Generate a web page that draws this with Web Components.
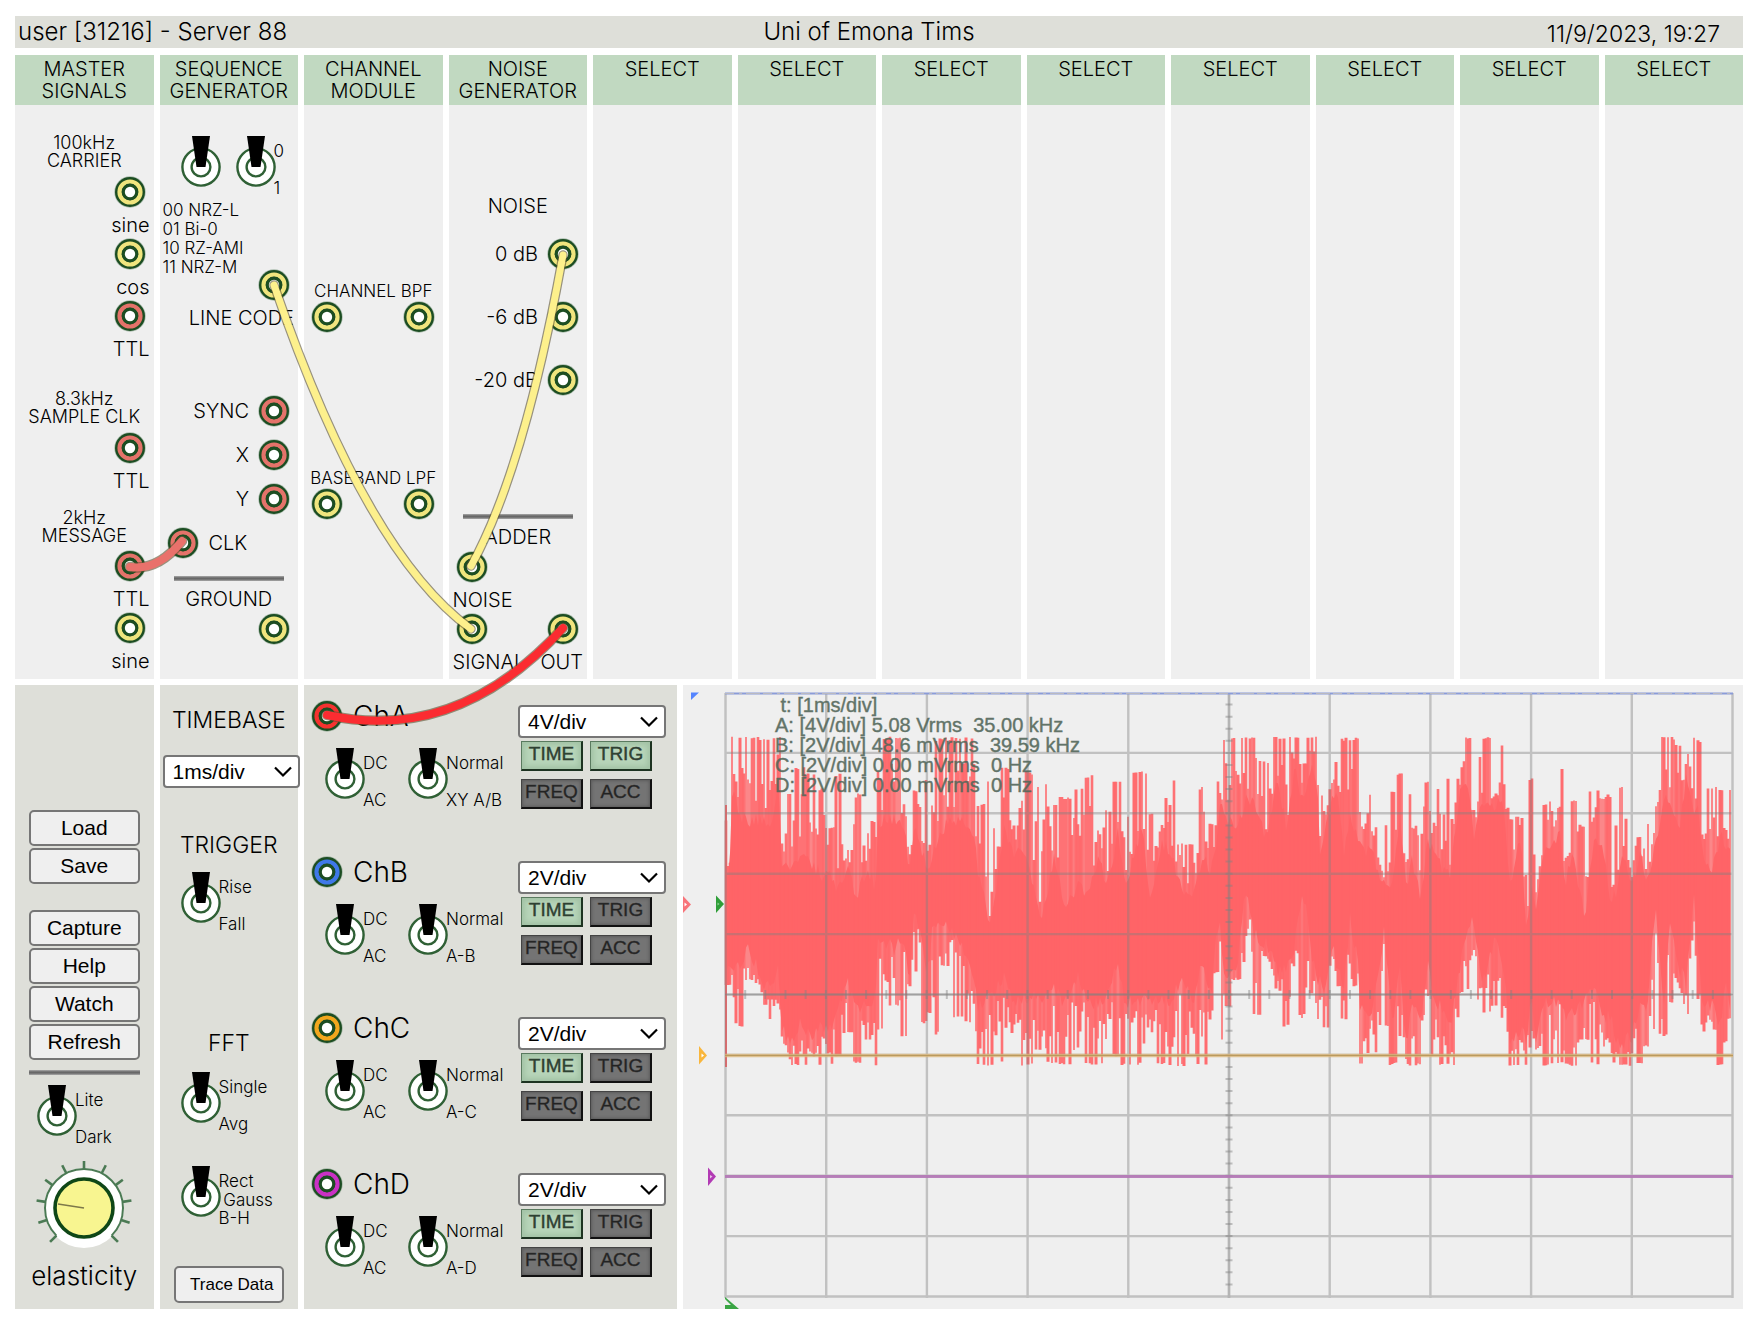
<!DOCTYPE html>
<html lang="en">
<head>
<meta charset="utf-8">
<title>Uni of Emona Tims</title>
<style>
  html, body { margin: 0; background: #fff; }
  body { font-family: Inter, "Noto Sans", sans-serif; font-weight: 300; color: #000; }
</style>
</head>
<body>
<tims-bench></tims-bench>

<template id="t-bench">
  <style>
    :host { display: block; padding: 16px 19px 19px 15px; }
    main { display: grid; gap: 6px; position: relative; margin-top: 7px; }
    .rack { display: grid; grid-template-columns: repeat(12, minmax(0, 1fr)); gap: 6px; }
    .desk { display: grid; grid-template-columns: 277fr 277fr 746fr 2120fr; gap: 6px; }
    .desk > * { min-width: 0; }
    .panel { background: #dedfd9; box-sizing: border-box; min-height: 624px; }

    .note { text-align: center; font-size: 18px; line-height: 18px; }
    .cap { text-align: center; font-size: 20px; line-height: 20px; }
    .fine { text-align: center; font-size: 17px; line-height: 20px; }
    .jackrow { display: flex; justify-content: flex-end; align-items: center; padding: 0 8px 0 7px; gap: 9px; font-size: 20px; line-height: 20px; }
    .jackrow.left { justify-content: flex-start; gap: 10px; }
    .jackrow.pair { justify-content: space-between; }
    .tag { display: flex; justify-content: flex-end; padding: 7px 4px 3px; font-size: 20px; line-height: 20px; }
    .tag.left { justify-content: flex-start; }
    .tag.pair { justify-content: space-between; }
    .r44 { height: 44px; }
    .r63 { height: 63px; }
    hr { box-sizing: border-box; height: 5px; margin: 0 14px; border: 0; background: linear-gradient(#aaa, #686868 40%, #686868 60%, #aaa); }

    .switches { display: flex; padding: 31px 0 0 21px; }
    .switches toggle-switch:first-child { width: 55px; }
    .codes { display: flex; justify-content: space-between; align-items: flex-start; height: 100px; padding: 3px 8px 0 3px; font-size: 17px; line-height: 19px; white-space: nowrap; }
    .codes patch-jack { align-self: flex-end; }

    .menu { display: flex; flex-direction: column; padding-top: 125px; }
    .menu form { display: flex; flex-direction: column; gap: 2px; margin: 0 14px; }
    .menu .second { margin-top: 24px; }
    .menu hr { margin-top: 10px; margin-bottom: 10px; }
    .menu toggle-switch { margin-left: 22px; }
    .menu knob-dial { margin: 14px auto 11px; }
    .big { text-align: center; font-size: 26px; line-height: 28px; }
    .head { text-align: center; font-size: 23px; line-height: 28px; }
    .time { display: flex; flex-direction: column; padding-top: 21px; position: relative; }
    .time toggle-switch { margin-left: 21px; }
    .time div-select { margin: 21px 0 43px 3px; width: 137px; }
  </style>
  <title-bar>
    <span slot="start">user [31216] - Server 88</span>
    <span slot="middle">Uni of Emona Tims</span>
    <time slot="end" datetime="2023-09-11T19:27">11/9/2023, 19:27</time>
  </title-bar>
  <main>
    <div class="rack">
      <rack-module>
        <span slot="name">MASTER<br>SIGNALS</span>
        <div class="note" style="padding:29px 0 6px">100kHz<br>CARRIER</div>
        <div class="jackrow"><patch-jack></patch-jack></div><div class="tag">sine</div>
        <div class="jackrow"><patch-jack></patch-jack></div><div class="tag">cos</div>
        <div class="jackrow"><patch-jack color="#e4736a"></patch-jack></div><div class="tag">TTL</div>
        <div class="note" style="padding:28px 0 6px">8.3kHz<br>SAMPLE CLK</div>
        <div class="jackrow"><patch-jack color="#e4736a"></patch-jack></div><div class="tag">TTL</div>
        <div class="note" style="padding:15px 0 5px">2kHz<br>MESSAGE</div>
        <div class="jackrow"><patch-jack color="#e4736a"></patch-jack></div><div class="tag">TTL</div>
        <div class="jackrow"><patch-jack></patch-jack></div><div class="tag">sine</div>
      </rack-module>
      <rack-module>
        <span slot="name">SEQUENCE<br>GENERATOR</span>
        <div class="switches"><toggle-switch></toggle-switch><toggle-switch labels="0|1"></toggle-switch></div>
        <div class="codes"><div>00 NRZ-L<br>01 Bi-0<br>10 RZ-AMI<br>11 NRZ-M</div><patch-jack></patch-jack></div>
        <div class="tag" style="padding-bottom:61px">LINE CODE</div>
        <div class="jackrow r44">SYNC<patch-jack color="#e4736a"></patch-jack></div>
        <div class="jackrow r44">X<patch-jack color="#e4736a"></patch-jack></div>
        <div class="jackrow r44">Y<patch-jack color="#e4736a"></patch-jack></div>
        <div class="jackrow r44 left"><patch-jack color="#e4736a"></patch-jack>CLK</div>
        <hr style="margin-top:11px">
        <div class="cap" style="padding:8px 0 4px">GROUND</div>
        <div class="jackrow"><patch-jack></patch-jack></div>
      </rack-module>
      <rack-module>
        <span slot="name">CHANNEL<br>MODULE</span>
        <div class="fine" style="padding-top:176px">CHANNEL BPF</div>
        <div class="jackrow pair"><patch-jack></patch-jack><patch-jack></patch-jack></div>
        <div class="fine" style="padding-top:135px">BASEBAND LPF</div>
        <div class="jackrow pair"><patch-jack></patch-jack><patch-jack></patch-jack></div>
      </rack-module>
      <rack-module>
        <span slot="name">NOISE<br>GENERATOR</span>
        <div class="cap" style="padding:91px 0 6px">NOISE</div>
        <div class="jackrow r63">0 dB<patch-jack></patch-jack></div>
        <div class="jackrow r63">-6 dB<patch-jack></patch-jack></div>
        <div class="jackrow r63">-20 dB<patch-jack></patch-jack></div>
        <hr style="margin-top:103px">
        <div class="cap" style="padding:8px 0 4px">ADDER</div>
        <div class="jackrow left"><patch-jack></patch-jack></div>
        <div class="tag left">NOISE</div>
        <div class="jackrow pair"><patch-jack></patch-jack><patch-jack></patch-jack></div>
        <div class="tag pair"><span>SIGNAL</span><span>OUT</span></div>
      </rack-module>
      <rack-module><span slot="name">SELECT</span></rack-module>
      <rack-module><span slot="name">SELECT</span></rack-module>
      <rack-module><span slot="name">SELECT</span></rack-module>
      <rack-module><span slot="name">SELECT</span></rack-module>
      <rack-module><span slot="name">SELECT</span></rack-module>
      <rack-module><span slot="name">SELECT</span></rack-module>
      <rack-module><span slot="name">SELECT</span></rack-module>
      <rack-module><span slot="name">SELECT</span></rack-module>
    </div>
    <div class="desk">
      <section class="panel menu">
        <form>
          <menu-button>Load</menu-button>
          <menu-button>Save</menu-button>
          <menu-button class="second">Capture</menu-button>
          <menu-button>Help</menu-button>
          <menu-button>Watch</menu-button>
          <menu-button>Refresh</menu-button>
        </form>
        <hr>
        <toggle-switch labels="Lite|Dark"></toggle-switch>
        <knob-dial label="elasticity"></knob-dial>
        <div class="big">elasticity</div>
      </section>
      <section class="panel time">
        <div class="head">TIMEBASE</div>
        <div-select label="Timebase" options="1ms/div|2ms/div|5ms/div"></div-select>
        <div class="head">TRIGGER</div>
        <toggle-switch labels="Rise|Fall" style="margin-top:13px"></toggle-switch>
        <div class="head" style="padding:95px 0 15px">FFT</div>
        <toggle-switch labels="Single|Avg"></toggle-switch>
        <toggle-switch labels="Rect| Gauss|B-H" style="margin:32px 0 38px 21px"></toggle-switch>
        <menu-button small style="margin:0 14px">Trace Data</menu-button>
      </section>
      <section class="panel">
        <scope-channel name="ChA" color="#f5322f" scale="4V/div" diff="XY A/B" trig></scope-channel>
        <scope-channel name="ChB" color="#3f78e8" scale="2V/div" diff="A-B"></scope-channel>
        <scope-channel name="ChC" color="#f2a71d" scale="2V/div" diff="A-C"></scope-channel>
        <scope-channel name="ChD" color="#c931c4" scale="2V/div" diff="A-D"></scope-channel>
      </section>
      <scope-screen> t: [1ms/div]
A: [4V/div] 5.08 Vrms  35.00 kHz
B: [2V/div] 48.6 mVrms  39.59 kHz
C: [2V/div] 0.00 mVrms  0 Hz
D: [2V/div] 0.00 mVrms  0 Hz</scope-screen>
    </div>
    <patch-cables></patch-cables>
  </main>
</template>

<template id="t-title">
  <style>
    :host { display: grid; grid-template-columns: 1fr auto 1fr; align-items: center; height: 32px; padding: 0 23px 0 3px; background: #dedfd9; font-size: 24px; line-height: 32px; }
    .end { text-align: right; padding-top: 4px; font-size: 23px; line-height: 28px; }
  </style>
  <div><slot name="start"></slot></div>
  <div><slot name="middle"></slot></div>
  <div class="end"><slot name="end"></slot></div>
</template>

<template id="t-module">
  <style>
    :host { display: block; min-height: 624px; background: #efefef; }
    button { display: flex; justify-content: center; align-items: flex-start; width: 100%; height: 50px; box-sizing: border-box; margin: 0; padding: 3px 0 0; border: 0; background: #c1d9c1; color: inherit; font: inherit; font-size: 20px; line-height: 22px; text-align: center; cursor: pointer; }
  </style>
  <button type="button"><slot name="name"></slot></button>
  <slot></slot>
</template>

<template id="t-jack">
  <style>
    :host { display: block; flex: none; width: 32px; height: 32px; }
    svg { display: block; }
  </style>
  <svg width="32" height="32" viewBox="0 0 32 32" aria-hidden="true">
    <circle cx="16" cy="16" r="15.7" fill="#7c9a80" opacity=".6"/>
    <circle cx="16" cy="16" r="15" fill="#1c4d22"/>
    <circle class="ring" cx="16" cy="16" r="10.4" fill="none" stroke-width="4.4"/>
    <circle cx="16" cy="16" r="8.4" fill="#1c4d22"/>
    <circle cx="16" cy="16" r="5.2" fill="#fff"/>
  </svg>
</template>

<template id="t-toggle">
  <style>
    :host { display: block; height: 62px; }
    label { display: flex; }
    .lever { display: grid; flex: none; width: 40px; height: 52px; }
    .lever > * { grid-area: 1 / 1; }
    input { appearance: none; width: 40px; height: 52px; margin: 0; cursor: pointer; }
    .names { display: flex; flex-direction: column; justify-content: space-between; box-sizing: border-box; height: 61px; padding-top: 6px; margin-left: -2px; font-size: 17px; line-height: 18px; white-space: pre; }
  </style>
  <label>
    <span class="lever">
      <svg width="40" height="52" viewBox="0 0 40 52" aria-hidden="true">
        <circle cx="20" cy="31" r="18.6" fill="#fff" stroke="#2f6035" stroke-width="2.4"/>
        <circle cx="20" cy="31" r="9.4" fill="#fff" stroke="#2f6035" stroke-width="2.4"/>
        <path d="M11 0H29L24.500 31H15.500Z" fill="#000"/>
      </svg>
      <input type="checkbox" aria-label="switch">
    </span>
    <span class="names"></span>
  </label>
</template>

<template id="t-button">
  <style>
    :host { display: block; }
    button { display: block; box-sizing: border-box; width: 100%; height: 36px; margin: 0; padding: 0; border: 2px solid #767676; border-radius: 5px; background: #efefef; color: #000; font: 400 21px/32px "Liberation Sans", Arial, sans-serif; white-space: nowrap; }
    :host([small]) button { height: 37px; font-size: 17px; padding-left: 6px; }
  </style>
  <button type="button"><slot></slot></button>
</template>

<template id="t-select">
  <style>
    :host { display: grid; height: 33px; position: relative; }
    select { grid-area: 1 / 1; appearance: none; box-sizing: border-box; width: 100%; height: 33px; margin: 0; padding: 0 8px; border: 2px solid #767676; border-radius: 4px; background: #fff; color: #000; font: 400 21px/28px "Liberation Sans", Arial, sans-serif; }
    svg { grid-area: 1 / 1; place-self: center end; margin-right: 8px; pointer-events: none; }
  </style>
  <select></select>
  <svg width="18" height="12" viewBox="0 0 18 12" aria-hidden="true"><path d="M1 1.500L9 9.500L17 1.500" fill="none" stroke="#000" stroke-width="2.2"/></svg>
</template>

<template id="t-key">
  <style>
    :host { display: block; }
    button { display: block; box-sizing: border-box; width: 62px; height: 30px; margin: 0; padding: 0 0 4px; border: 1px solid #444; border-right: 2px solid #111; border-bottom: 2px solid #111; background: #747474; box-shadow: inset 0 0 3px 1px #5c5c5c; color: #222; font: 400 19px/23px "Liberation Sans", Arial, sans-serif; -webkit-text-stroke: 0.4px #333; text-align: center; }
    :host([on]) button { background: #b7d5b9; border-color: #5a7a5f #1d3321 #1d3321 #5a7a5f; box-shadow: inset 0 0 5px 3px #a3c3a6; color: #2c4631; }
  </style>
  <button type="button"><slot></slot></button>
</template>

<template id="t-knob">
  <style>
    :host { display: grid; width: 96px; height: 90px; }
    svg, input { grid-area: 1 / 1; }
    input { width: 96px; height: 90px; margin: 0; opacity: 0; cursor: grab; }
  </style>
  <svg width="96" height="90" viewBox="-48 -47 96 90" aria-hidden="true">
    <circle r="40" fill="#fff"/>
    <path d="M-27.6 27.6A39 39 0 1 1 27.6 27.6" fill="none" stroke="#4b7a54" stroke-width="2"/>
    <g class="ticks" stroke="#4b7a54" stroke-width="2.6"></g>
    <circle r="29" fill="#f8f590" stroke="#0f4717" stroke-width="3.6"/>
    <path d="M0 0L-26 -4" stroke="#7d784a" stroke-width="1.6"/>
  </svg>
  <input type="range" min="0" max="100" value="22">
</template>

<template id="t-channel">
  <style>
    :host { display: flex; justify-content: space-between; box-sizing: border-box; height: 156px; padding: 0 11px 0 7px; }
    .title { display: flex; align-items: center; gap: 10px; padding-top: 15px; font-size: 28px; line-height: 32px; }
    .pairs { display: flex; padding: 16px 0 0 14px; }
    .pairs toggle-switch:first-child { width: 83px; }
    .right { padding-top: 20px; width: 148px; }
    .keys { display: grid; grid-template-columns: 62px 62px; gap: 8px 7px; padding: 3px 0 0 3px; }
  </style>
  <div>
    <div class="title"><patch-jack></patch-jack><span class="name"></span></div>
    <div class="pairs"><toggle-switch labels="DC|AC"></toggle-switch><toggle-switch class="diff"></toggle-switch></div>
  </div>
  <div class="right">
    <div-select></div-select>
    <div class="keys">
      <push-key on>TIME</push-key><push-key class="trig">TRIG</push-key>
      <push-key>FREQ</push-key><push-key>ACC</push-key>
    </div>
  </div>
</template>

<template id="t-screen">
  <style>
    :host { display: grid; min-height: 624px; background: #efefef; }
    svg, .readout { grid-area: 1 / 1; }
    svg { display: block; width: 100%; height: 624px; }
    .readout { padding: 10px 0 0 92px; white-space: pre; font: 400 20px/20px "Liberation Sans", Arial, sans-serif; color: #53675a; -webkit-text-stroke: 0.4px #53675a; opacity: .9; z-index: 0; }
  </style>
  <svg viewBox="0 0 1060 624" preserveAspectRatio="none" aria-hidden="true">
    <path class="core" fill="#ff6467"/>
    <g class="trace" stroke="#ff6467" fill="none"></g>
    <g class="grid" stroke="#808080" fill="none"></g>
    <path d="M42 370.5H1050" stroke="#dcb67a" stroke-width="3.6" opacity=".8"/>
    <path d="M42 370.5H1050" stroke="#b99a5e" stroke-width="1"/>
    <path d="M42 491.5H1050" stroke="#b477b7" stroke-width="3" opacity=".9"/>
    <path d="M42 8.5H1050" stroke="#8b9cd8" stroke-width="2"/>
    <path d="M42 8.5H1050" stroke="#b9b9c0" stroke-width="1" stroke-dasharray="9 5 3 4 14 3"/>
    <path d="M8 7.5H16L8 15Z" fill="#5585ff"/>
    <path d="M0 211L8 219.5L0 228Z" fill="#f8747a"/><path d="M1.5 217.5L4 219.5L1.5 221.5Z" fill="#fff"/>
    <path d="M33 210.5L41 219L33 228Z" fill="#2f9e38"/><path d="M34.5 217.5L36.5 219L34.5 220.5Z" fill="#8fd094"/>
    <path d="M16 361L24 370.5L16 379.5Z" fill="#f9b63c"/><path d="M18.5 368.5L21 370.5L18.5 372.5Z" fill="#fff"/>
    <path d="M25 482.5L33 491.5L25 501Z" fill="#b23ab4"/><path d="M27 490L29.5 491.5L27 493.5Z" fill="#e6c4e6"/>
    <path d="M42 612L56 624H42V620H48L42 614Z" fill="#3aa544"/>
  </svg>
  <div class="readout"><slot></slot></div>
</template>

<template id="t-cables">
  <style>
    :host { display: block; position: absolute; inset: 0; pointer-events: none; }
    svg { display: block; width: 100%; height: 100%; }
    path { fill: none; stroke-linecap: round; }
  </style>
  <svg viewBox="15 55 1728 1254" preserveAspectRatio="none" aria-hidden="true"></svg>
</template>

<script>
  class Part extends HTMLElement {
    static template = '';
    constructor() {
      super();
      const root = this.attachShadow({ mode: 'open' });
      root.append(document.getElementById(this.constructor.template).content.cloneNode(true));
    }
    $(selector) { return this.shadowRoot.querySelector(selector); }
    attr(name, fallback = '') { return this.getAttribute(name) ?? fallback; }
  }

  class PatchJack extends Part {
    static template = 't-jack';
    static observedAttributes = ['color'];
    connectedCallback() { this.paint(); }
    attributeChangedCallback() { this.paint(); }
    paint() { this.$('.ring').setAttribute('stroke', this.attr('color', '#f0e57e')); }
  }

  class ToggleSwitch extends Part {
    static template = 't-toggle';
    static observedAttributes = ['labels'];
    connectedCallback() { this.paint(); }
    attributeChangedCallback() { this.paint(); }
    paint() {
      const labels = this.attr('labels');
      this.$('.names').replaceChildren(...(labels ? labels.split('|') : []).map(text => {
        const span = document.createElement('span');
        span.textContent = text;
        return span;
      }));
    }
  }

  class DivSelect extends Part {
    static template = 't-select';
    static observedAttributes = ['options', 'label'];
    connectedCallback() { this.paint(); }
    attributeChangedCallback() { this.paint(); }
    paint() {
      const select = this.$('select');
      select.setAttribute('aria-label', this.attr('label'));
      select.replaceChildren(...this.attr('options').split('|').map(text => new Option(text)));
    }
  }

  class KnobDial extends Part {
    static template = 't-knob';
    connectedCallback() {
      this.$('input').setAttribute('aria-label', this.attr('label'));
      let marks = '';
      for (let a = -135; a <= 135; a += 27) marks += `<path d="M0 -39V-48" transform="rotate(${a})"/>`;
      this.$('.ticks').innerHTML = marks;
    }
  }

  class ScopeChannel extends Part {
    static template = 't-channel';
    connectedCallback() {
      const name = this.attr('name');
      this.$('.name').textContent = name;
      this.$('patch-jack').setAttribute('color', this.attr('color'));
      this.$('.diff').setAttribute('labels', 'Normal|' + this.attr('diff'));
      const select = this.$('div-select');
      select.setAttribute('label', name + ' scale');
      select.setAttribute('options', this.attr('scale') + '|1V/div|500mV/div');
      this.$('.trig').toggleAttribute('on', this.hasAttribute('trig'));
    }
  }

  // Envelope of trace A: x, highest spike, solid top, solid bottom, lowest spike.
  const LEFT = [[133,360,420,900,1160],[137,420,560,900,915],[145,550,560,880,915],[155,170,300,870,1030],[175,170,380,900,1040],[200,170,400,820,900],[225,170,400,880,910],[245,170,400,950,975],[265,170,440,930,1020],[288,170,270,900,1010],[298,490,530,1060,1110],[320,340,540,1110,1155],[350,260,500,1060,1155],[380,280,520,1100,1155],[410,320,560,1070,1155],[440,440,570,1060,1155],[460,280,600,1010,1130],[490,510,530,940,1060],[515,340,640,1000,1150],[545,460,540,1010,1080],[570,420,600,1000,1160],[577,170,400,790,1050],[620,170,400,830,980],[655,170,420,800,1070],[668,500,560,950,1015],[685,330,420,690,880],[715,290,520,880,1030],[727,400,550,860,1000],[738,170,500,740,1070],[780,170,400,760,860],[810,170,400,800,1015],[855,170,430,930,1030],[866,370,540,1000,1160],[905,290,720,980,1160],[945,260,420,900,1155],[975,380,500,1000,1060],[1010,270,500,980,1160],[1050,310,720,980,1110],[1090,370,500,950,1150],[1120,350,670,1000,1155],[1160,320,590,910,1110],[1185,280,620,1000,1155],[1225,280,500,980,1155],[1240,390,610,980,1140],[1275,300,430,870,1130],[1295,410,600,1000,1160],[1345,270,420,980,1155],[1370,400,650,1000,1110],[1400,350,460,980,1155],[1430,300,500,1000,1155],[1460,490,620,900,1160],[1490,490,640,1000,1130],[1520,320,500,870,1155],[1545,430,550,980,1020],[1560,170,480,770,880]];
  const RIGHT = [[0,320,340,760,1080],[12,170,400,920,980],[50,170,420,880,900],[75,170,340,650,850],[100,170,340,790,1010],[135,240,460,820,840],[165,170,280,900,980],[195,170,430,880,1040],[215,170,230,830,860],[240,250,350,650,1015],[265,170,230,850,940],[283,170,300,930,1080],[290,340,510,930,960],[305,350,430,970,1045],[325,240,310,820,830],[345,170,360,910,920],[360,170,500,940,1020],[375,175,380,740,900],[400,170,460,870,920],[405,320,480,1000,1155],[440,340,500,1020,1120],[475,430,600,780,1040],[500,330,590,1050,1155],[520,280,380,900,1070],[540,520,590,1130,1155],[555,340,520,1000,1160],[580,460,630,1060,1155],[600,300,470,870,1110],[620,320,490,1000,1130],[645,400,550,1000,1155],[665,290,570,1070,1155],[690,260,340,920,1015],[712,170,270,780,930],[735,340,450,750,920],[755,170,350,920,960],[770,170,350,900,1000],[795,340,360,800,980],[818,190,340,870,1015],[840,310,600,1110,1160],[870,410,440,1070,1155],[887,580,730,1100,1155],[900,290,600,960,1155],[915,520,670,1100,1120],[940,370,470,1000,1160],[965,320,460,1000,1155],[985,260,450,970,1150],[1000,500,590,1050,1155],[1020,360,490,1020,1160],[1055,430,690,980,1080],[1080,330,460,950,1155],[1110,350,500,1050,1100],[1130,340,630,1030,1120],[1145,430,620,1100,1150],[1165,320,480,1110,1155],[1190,540,600,1100,1160],[1215,470,500,1000,1155],[1235,430,600,1000,1100],[1260,310,470,710,1050],[1285,170,340,1000,1070],[1300,170,350,750,970],[1330,190,420,900,940],[1350,220,260,930,1070],[1370,170,380,670,830],[1385,180,370,870,960],[1398,460,510,1000,1155],[1425,320,550,1000,1050],[1450,330,430,1060,1160],[1465,430,500,900,1090],[1480,330,450,1060,1155]];
  const ENVELOPE = [
    ...LEFT.map(([x, ...y]) => [42 + (x - 133) / 2.904, ...y.map(v => v / 3 - 5)]),
    ...RIGHT.map(([x, ...y]) => [537 + x / 2.893, ...y.map(v => v / 3 - 5)]),
  ];

  class ScopeScreen extends Part {
    static template = 't-screen';
    connectedCallback() { this.drawTrace(); this.drawGrid(); }
    drawTrace() {
      let seed = 20231;
      const random = () => (seed = (seed * 16807) % 2147483647) / 2147483647;
      const layers = ['', '', ''];
      let top = '', bottom = [];
      let i = 0;
      for (let x = 43; x < 1049; x += 2) {
        while (i < ENVELOPE.length - 2 && ENVELOPE[i + 1][0] < x) i++;
        const a = ENVELOPE[i], b = ENVELOPE[i + 1];
        const t = Math.min(1, Math.max(0, (x - a[0]) / (b[0] - a[0])));
        const near = t < .5 ? a : b;
        const mix = k => a[k] + (b[k] - a[k]) * t;
        const spikeTop = near[1], spikeBottom = Math.min(381, near[4]);
        const solidTop = mix(2), solidBottom = mix(3);
        const reach = () => { const r = random(); return r < .45 ? r * .1 : .3 + random() * .7; };
        const y0 = spikeTop + (solidTop - spikeTop) * reach();
        const y1 = spikeBottom + (solidBottom - spikeBottom) * reach();
        layers[Math.floor(random() * 3)] += `M${x.toFixed(1)} ${y0.toFixed(1)}V${y1.toFixed(1)}`;
        const inTop = solidTop + random() * 14, inBottom = solidBottom - random() * 16;
        top += `${top ? 'L' : 'M'}${x.toFixed(1)} ${inTop.toFixed(1)}`;
        bottom.unshift(`L${x.toFixed(1)} ${inBottom.toFixed(1)}`);
      }
      this.$('.core').setAttribute('d', top + bottom.join('') + 'Z');
      this.$('.trace').innerHTML = layers.map((d, n) =>
        `<path d="${d}" stroke-width="${[2, 2.6, 3][n]}" opacity="${[.75, .9, .95][n]}"/>`).join('')
        + '<path d="M43 120V382" stroke-width="2"/>';
    }
    drawGrid() {
      let lines = '', ticks = '';
      for (let n = 0; n <= 10; n++) {
        lines += `M${42.5 + n * 100.7} 8V613`;
        if (n > 0) lines += `M42 ${(7.5 + n * 60.4).toFixed(1)}H1050`;
      }
      for (let n = 1; n < 50; n++) {
        ticks += `M542.5 ${(7.5 + n * 12.08).toFixed(1)}h7`;
        ticks += `M${(42 + n * 20.16).toFixed(1)} 305v9`;
      }
      this.$('.grid').innerHTML = `<path d="${lines}" stroke-width="2.4" opacity=".42"/>`
        + `<path d="M546 8V613" stroke-width="3" opacity=".2"/>`
        + `<path d="M42 309.5H1050" stroke-width="1.4" opacity=".5"/>`
        + `<path d="${ticks}" stroke-width="2" opacity=".45"/>`;
    }
  }

  const CABLES = [
    ['#e9716b', 'M130 567Q158 571 182 541', 8],
    ['#fdf08c', 'M274 285Q366 553 471 629', 7],
    ['#fdf08c', 'M563 255Q524 471 471 566', 7],
    ['#fb2c31', 'M563 628Q457 744 327 715', 8],
  ];

  class PatchCables extends Part {
    static template = 't-cables';
    connectedCallback() {
      this.$('svg').innerHTML = CABLES.map(([color, d, width]) =>
        `<path d="${d}" stroke="#5b5230" stroke-opacity=".6" stroke-width="${width + 2.4}"/><path d="${d}" stroke="${color}" stroke-width="${width}"/>`).join('');
    }
  }

  customElements.define('patch-jack', PatchJack);
  customElements.define('toggle-switch', ToggleSwitch);
  customElements.define('div-select', DivSelect);
  customElements.define('knob-dial', KnobDial);
  customElements.define('menu-button', class extends Part { static template = 't-button'; });
  customElements.define('push-key', class extends Part { static template = 't-key'; });
  customElements.define('title-bar', class extends Part { static template = 't-title'; });
  customElements.define('rack-module', class extends Part { static template = 't-module'; });
  customElements.define('scope-channel', ScopeChannel);
  customElements.define('scope-screen', ScopeScreen);
  customElements.define('patch-cables', PatchCables);
  customElements.define('tims-bench', class extends Part { static template = 't-bench'; });
</script>
</body>
</html>
